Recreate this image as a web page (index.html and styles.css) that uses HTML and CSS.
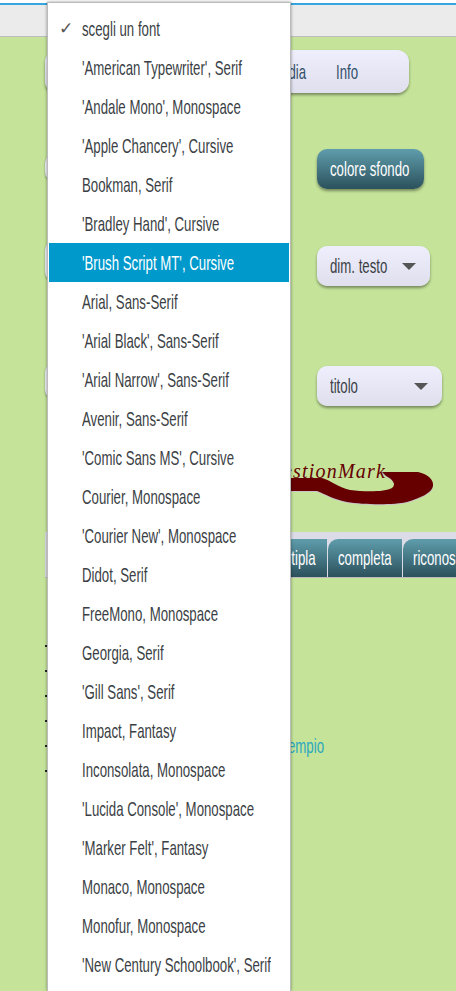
FILE: index.html
```html
<!DOCTYPE html>
<html lang="it">
<head>
    <meta charset="UTF-8">
    <meta name="viewport" content="width=device-width, initial-scale=1.0">
    <title>QuestionMark</title>
    <link rel="stylesheet" href="styles.css">
</head>
<body>
    <div class="top-line"></div>
    <div class="top-bar"></div>

    <main class="page">
        <nav class="nav-box">
            <span class="nav-item"><span class="narrow">Media</span></span>
            <span class="nav-item"><span class="narrow">Info</span></span>
        </nav>

        <div class="row row-color">
            <span class="stub stub-color"></span>
            <button type="button" class="btn-dark"><span class="narrow">colore sfondo</span></button>
        </div>

        <div class="row row-size">
            <span class="stub stub-size"></span>
            <div class="drop drop-size"><span class="narrow">dim. testo</span><i class="caret"></i></div>
        </div>

        <div class="row row-title">
            <span class="stub stub-title"></span>
            <div class="drop drop-title"><span class="narrow">titolo</span><i class="caret"></i></div>
        </div>

        <div class="logo">
            <svg class="logo-swoosh" width="456" height="50" viewBox="0 460 456 50">
                <path d="M270 479 H322 C330 481 338 488 350 491 C365 493 385 493 392 489 C397 485 392 480 386 477 L382 473 H418 C428 475 434 481 433 487 C432 494 420 499 407 503 C395 506 365 506 347 503 C335 501 325 495 317 492 H270 Z" fill="#c9c4c8"/>
                <path d="M270 478 H322 C330 480 338 487 350 490 C365 492 385 492 392 488 C397 484 392 479 386 476 L382 472 H418 C428 474 434 480 433 486 C432 493 420 498 407 502 C395 505 365 505 347 502 C335 500 325 494 317 491 H270 Z" fill="#660000"/>
            </svg>
            <span class="logo-text">QuestionMark</span>
        </div>

        <div class="tabs">
            <span class="tab tab-multi"><span class="narrow">multipla</span></span>
            <span class="tab tab-full"><span class="narrow">completa</span></span>
            <span class="tab tab-last"><span class="narrow">riconoscimento</span></span>
        </div>

        <ul class="list">
            <li></li>
            <li></li>
            <li></li>
            <li></li>
            <li></li>
            <li></li>
        </ul>
        <a class="sample-link" href="#"><span class="narrow">esempio</span></a>
    </main>

    <ul class="font-menu">
        <li class="opt"><span class="check">✓</span><span class="narrow">scegli un font</span></li>
        <li class="opt"><span class="narrow">'American Typewriter', Serif</span></li>
        <li class="opt"><span class="narrow">'Andale Mono', Monospace</span></li>
        <li class="opt"><span class="narrow">'Apple Chancery', Cursive</span></li>
        <li class="opt"><span class="narrow">Bookman, Serif</span></li>
        <li class="opt"><span class="narrow">'Bradley Hand', Cursive</span></li>
        <li class="opt opt-active"><span class="narrow">'Brush Script MT', Cursive</span></li>
        <li class="opt"><span class="narrow">Arial, Sans-Serif</span></li>
        <li class="opt"><span class="narrow">'Arial Black', Sans-Serif</span></li>
        <li class="opt"><span class="narrow">'Arial Narrow', Sans-Serif</span></li>
        <li class="opt"><span class="narrow">Avenir, Sans-Serif</span></li>
        <li class="opt"><span class="narrow">'Comic Sans MS', Cursive</span></li>
        <li class="opt"><span class="narrow">Courier, Monospace</span></li>
        <li class="opt"><span class="narrow">'Courier New', Monospace</span></li>
        <li class="opt"><span class="narrow">Didot, Serif</span></li>
        <li class="opt"><span class="narrow">FreeMono, Monospace</span></li>
        <li class="opt"><span class="narrow">Georgia, Serif</span></li>
        <li class="opt"><span class="narrow">'Gill Sans', Serif</span></li>
        <li class="opt"><span class="narrow">Impact, Fantasy</span></li>
        <li class="opt"><span class="narrow">Inconsolata, Monospace</span></li>
        <li class="opt"><span class="narrow">'Lucida Console', Monospace</span></li>
        <li class="opt"><span class="narrow">'Marker Felt', Fantasy</span></li>
        <li class="opt"><span class="narrow">Monaco, Monospace</span></li>
        <li class="opt"><span class="narrow">Monofur, Monospace</span></li>
        <li class="opt"><span class="narrow">'New Century Schoolbook', Serif</span></li>
    </ul>
</body>
</html>
```
FILE: styles.css
```css
* {
    box-sizing: border-box;
    margin: 0;
    padding: 0;
}

html, body {
    height: 991px;
    overflow: hidden;
}

body {
    background-color: #c5e49a;
    font-family: "Liberation Sans", sans-serif;
    font-size: 21px;
    color: #3b3f45;
}

/* il font condensato non c'e': si stringe il testo in orizzontale */
.narrow {
    display: inline-block;
    transform: scaleX(0.63);
    transform-origin: left center;
    white-space: nowrap;
}

.top-line {
    height: 5px;
    background: linear-gradient(#fff 0 3px, #35a6e0 3px);
}

.top-bar {
    height: 32px;
    background-color: #ebebeb;
    border-bottom: 1px solid #bdbdbd;
}

.page {
    padding-left: 45px;
}

.row {
    display: flex;
    align-items: flex-start;
    height: 40px;
}

.nav-box {
    width: 364px;
    height: 43px;
    margin-top: 13px;
    display: flex;
    align-items: center;
    padding-left: 225px;
    border-radius: 12px;
    background: linear-gradient(#eeeefc, #dfdfee);
    box-shadow: 0 2px 3px rgba(0, 0, 0, 0.4);
    color: #34506b;
}

.nav-item {
    width: 66px;
    white-space: nowrap;
}

.row-color {
    margin-top: 56px;
}

.stub {
    display: block;
    flex: none;
    width: 100px;
    margin-right: 172px;
    background: #eeeefa;
    border-radius: 10px;
    box-shadow: 0 1px 2px rgba(0, 0, 0, 0.4);
}

.stub-color {
    height: 29px;
    margin-top: 4px;
}

.btn-dark {
    width: 107px;
    height: 40px;
    padding-left: 13px;
    border: none;
    border-radius: 10px;
    background: linear-gradient(#5f9dac, #2b515c);
    box-shadow: 0 2px 3px rgba(0, 0, 0, 0.4);
    color: #fff;
    font-family: inherit;
    font-size: 21px;
    text-align: left;
}

.row-size {
    margin-top: 57px;
}

.stub-size {
    height: 42px;
    margin-top: -6px;
}

.drop {
    display: flex;
    justify-content: space-between;
    align-items: center;
    height: 40px;
    padding: 0 14px 0 13px;
    border-radius: 10px;
    background: linear-gradient(#eeeefc, #dfdfee);
    box-shadow: 0 2px 3px rgba(0, 0, 0, 0.4);
}

.drop .narrow {
    width: 60px;
}

.drop-size {
    width: 113px;
}

.row-title {
    margin-top: 80px;
}

.stub-title {
    height: 38px;
    margin-top: -4px;
}

.drop-title {
    width: 125px;
}

.caret {
    display: block;
    width: 0;
    height: 0;
    border-left: 7px solid transparent;
    border-right: 7px solid transparent;
    border-top: 7px solid #555;
}

.logo {
    position: relative;
    height: 50px;
    margin-top: 54px;
    margin-left: -45px;
}

.logo-swoosh {
    display: block;
}

.logo-text {
    position: absolute;
    right: 70px;
    top: 0;
    font-family: "Liberation Serif", serif;
    font-style: italic;
    font-size: 20px;
    letter-spacing: 1.2px;
    color: #660000;
}

.tabs {
    display: flex;
    gap: 1px;
    height: 46px;
    margin-top: 22px;
    padding-top: 7px;
    padding-left: 3px;
    background: #dcdce8;
    border-bottom: 1px solid #bbb;
    overflow: hidden;
    white-space: nowrap;
}

.tab {
    flex: none;
    height: 38px;
    line-height: 38px;
    border-radius: 10px 0 0 0;
    background: linear-gradient(#5f9dac, #2b515c);
    color: #fff;
}

.tab-multi {
    width: 279px;
    padding-left: 222px;
}

.tab-full {
    width: 74px;
    padding-left: 10px;
}

.tab-last {
    width: 120px;
    padding-left: 10px;
}

.list {
    list-style: none;
    margin-top: 67px;
}

.list li {
    width: 2px;
    height: 2px;
    margin-bottom: 23px;
    background: #222;
}

.sample-link {
    position: absolute;
    left: 274px;
    top: 734px;
    color: #2aa7c0;
    text-decoration: none;
}

.font-menu {
    position: absolute;
    top: 2px;
    left: 47px;
    width: 244px;
    height: 989px;
    overflow: hidden;
    list-style: none;
    padding-top: 6px;
    background: #fff;
    border: 1px solid #bbb;
    border-bottom: none;
    box-shadow: 0 0 3px rgba(0, 0, 0, 0.4);
}

.opt {
    position: relative;
    height: 39px;
    margin: 0 1px;
    padding-left: 33px;
    line-height: 39px;
    white-space: nowrap;
}

.opt-active {
    background: #0099cc;
    color: #fff;
}

.check {
    position: absolute;
    left: 10px;
    font-size: 17px;
    color: #555;
}
```
